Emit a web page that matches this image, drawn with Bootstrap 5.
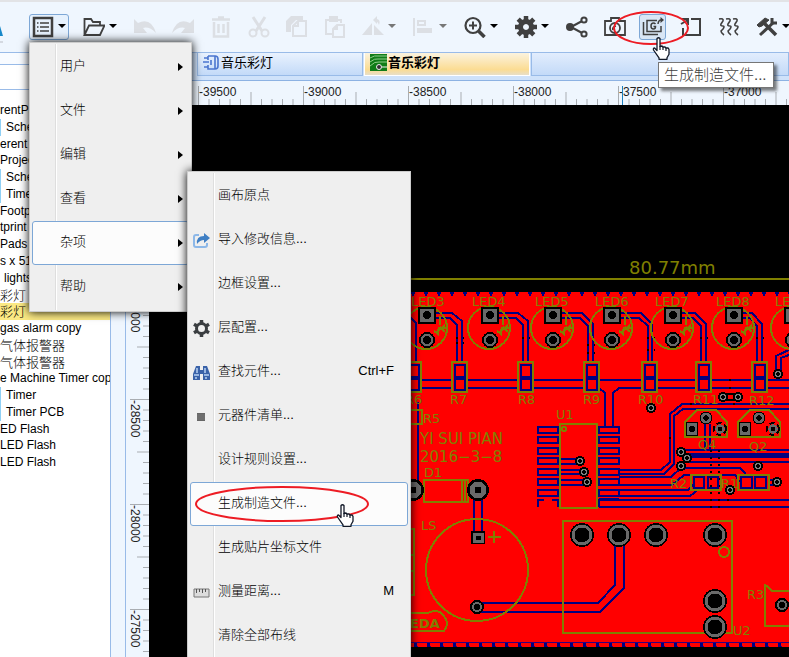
<!DOCTYPE html>
<html lang="zh-CN">
<head>
<meta charset="utf-8">
<meta name="viewport" content="width=device-width, initial-scale=1">
<title>音乐彩灯</title>
<link href="https://cdn.jsdelivr.net/npm/bootstrap@5.3.0/dist/css/bootstrap.min.css" rel="stylesheet">
<style>
:root { --edge: #99bbe8; --pale: #eff6fe; --ink: #404040; }
body { font-family: "Liberation Sans", "Noto Sans CJK SC", sans-serif; font-size: 13px; line-height: 17px; color: #000; background: var(--pale); }
.toolbar { height: 52px; border-top: 2px solid #e2e3e6; padding: 12px 0 0 29px; gap: 11px; }
.tool { width: 27px; height: 26px; padding: 0; border: 1px solid transparent; border-radius: 3px; background: none; color: var(--ink); flex: none; display: flex; align-items: center; justify-content: center; }
.tool.split { width: 40px; justify-content: space-between; padding: 0 2px; }
.tool.split::after { content: ""; border: 4px solid transparent; border-top-color: #000; border-bottom: 0; margin-bottom: 2px; }
.tool:disabled { color: #dcdfe4; }
.tool.split:disabled::after { border-top-color: #777; }
.tool.open { border-color: #7da7d6; background: #e6f1fd; }
.tool.hover { border-color: #7da7d6; background: #d9e6f5; }
.tool svg { width: 22px; height: 22px; }
.brand-edge { position: absolute; left: 0; top: 22px; width: 4px; height: 22px; }
.side { width: 111px; border-right: 1px solid var(--edge); border-top: 1px solid var(--edge); background: #fff; flex: none; }
.side-head { height: 12px; background: #f8fbff; border-bottom: 1px solid var(--edge); }
.side-search { height: 25px; border: 0; border-bottom: 1px solid var(--edge); width: 100%; }
.tree { height: 369px; margin-top: 12px; grid-auto-rows: 1fr; font-size: 12px; list-style: none; }
.tree li { white-space: nowrap; overflow: hidden; }
.tree .in { padding-left: 5px; border-left: 1px solid #8fd0f5; }
.tree .zh { font-size: 13px; font-weight: 300; }
.tree .picked { background: #fbe983; }
.gap-col { width: 14px; flex: none; border-top: 1px solid var(--edge); }
.tabs { height: 29px; border-top: 1px solid var(--edge); border-bottom: 1px solid #8db2e3; background: #cfe2fa; padding-left: 72px; }
.tab-btn { height: 23px; border: 1px solid var(--edge); border-top: 0; background: linear-gradient(#e9f2fe, #c3daf8); padding: 0 0 4px 5px; gap: 1px; width: 166px; margin-right: 1px; }
.tab-btn.current { background: linear-gradient(#fbf3df, #fbdc93 75%, #e8dfc8); font-weight: bold; border-color: #fff; }
.tab-rest { height: 23px; border: 1px solid var(--edge); border-top: 0; background: linear-gradient(#e2edfd, #c3daf8); }
.ruler-h { height: 24px; width: 100%; background: var(--pale); }
.ruler-v { width: 24px; flex: none; background: var(--pale); border-left: 1px solid var(--edge); }
.ruler-h text, .ruler-v text { font-size: 12px; fill: #222; }
.board { background: #000; }
.board text { font-family: "DejaVu Sans", sans-serif; font-size: 13px; fill: #808000; }
.board .mid { font-size: 15px; }
.board .big { font-size: 18px; }
.silk { fill: none; stroke: #808000; stroke-width: 2; }
.wire { fill: none; stroke: #000080; stroke-width: 2; }
.popup { position: absolute; background: #efefef; border: 1px solid #ccc; border-radius: 0; padding: 2px; margin: 0; box-shadow: 0 0 9px #000; font-size: 13px; min-width: 0; color: #000; }
.popup::before { content: ""; position: absolute; top: 1px; bottom: 1px; left: 25px; width: 2px; background: #fff; border-left: 1px solid #dedede; }
.menu-main { left: 29px; top: 42px; width: 163px; z-index: 10; }
.menu-sub { left: 187px; top: 171px; width: 224px; z-index: 11; }
.popup .dropdown-item { position: relative; height: 44px; padding: 0 13px 4px 27px; border: 1px solid transparent; border-radius: 3px; color: #000; font-weight: 300; }
.menu-main .dropdown-item { padding-right: 5px; }
.popup .dropdown-item.on { background: #fcfcfc; border-color: #7da7d6; }
.menu-main .dropdown-item::after { content: ""; border: 4px solid transparent; border-left: 5px solid #000; border-right: 0; margin-top: 4px; }
.popup .dropdown-item svg { position: absolute; left: 2px; top: 13px; width: 17px; height: 17px; }
.tip-box { position: absolute; left: 658px; top: 62px; padding: 3px 6px 3px 5px; font-size: 15px; font-weight: 300; line-height: 18px; color: #404040; background: #fff; border: 1px solid #767676; box-shadow: 3px 3px 3px rgba(0,0,0,.5); z-index: 12; }
.note { position: absolute; z-index: 13; pointer-events: none; overflow: visible; }
.note-top { left: 613px; top: 11px; width: 76px; height: 52px; }
.note-sub { left: 194px; top: 486px; width: 176px; height: 44px; }
</style>
<script src="https://cdn.jsdelivr.net/npm/bootstrap@5.3.0/dist/js/bootstrap.bundle.min.js"></script>
</head>
<body class="vh-100 overflow-hidden d-flex flex-column position-relative">

<svg width="0" height="0" class="position-absolute" aria-hidden="true">
  <defs>
    <symbol id="hand" viewBox="0 0 18 25"><path d="M5 2.500q1.500-1.500 3 0v8l2-.5 1 1 2-.2 1 1.200 2-.2 1 1.500v5l-2 3.500v1.500H7v-1.500L1.500 14q-.5-2 1-2L5 14.500z" fill="#fff" stroke="#111827" stroke-width="1.300" stroke-linejoin="round"/><path d="M8 10v4M11 11v3M14 12v3" stroke="#111827" stroke-width="1.200"/></symbol>
    <symbol id="cog" viewBox="0 0 22 22"><path fill="none" stroke="currentColor" stroke-width="5" d="M11 5.500a5.500 5.500 0 1 0 .01 0z"/><path stroke="currentColor" stroke-width="4.500" d="M11 0v4M11 18v4M0 11h4M18 11h4M3.200 3.200l3 3M15.800 15.800l3 3M18.800 3.200l-3 3M6.200 15.800l-3 3"/></symbol>
    <g id="led">
      <circle r="21" cx="-1" cy="13" class="silk"/>
      <path d="M-9-8H9V9H-9z" fill="#000"/><path d="M-7-6H7V7H-7z" fill="#696969"/><circle r="4" fill="#000"/>
      <path d="M-8 25h16" stroke="#000080" stroke-width="4"/><circle cy="25" r="8" fill="#000"/><circle cy="25" r="5" fill="#000" stroke="#696969" stroke-width="2.500"/>
      <path d="M13 1v9M18 10l-9 8M20 13h-8l-2 6M18 17l-5-5M7 16l5 4" class="silk" stroke-width="1.500"/>
    </g>
    <g id="res">
      <path d="M-8 1H8V30H-8z" fill="#f00"/><path class="wire" d="M-5 14V3H5V14M-5 18V28H5V18"/><path d="M-6 14h12v4H-6z" fill="#000080"/><path class="silk" d="M-8 0H7V30H-8z"/>
    </g>
    <g id="via"><circle r="5" fill="#000"/><circle r="2.500" fill="#000" stroke="#808080" stroke-width="1.600"/></g>
    <g id="hole"><circle r="12" fill="#000"/><circle r="9" fill="#000" stroke="#696969" stroke-width="3"/></g>
    <g id="trans"><path class="silk" d="M0 0V-15L12-27H31L42-15V0z"/><path d="M1-15H13V-1H1z" fill="#000"/><path d="M2-14H12V-2H2z" fill="#696969"/><circle cx="7" cy="-8" r="3" fill="#000"/><circle cx="21" cy="-19" r="6.500" fill="#000"/><circle cx="21" cy="-19" r="4" stroke="#696969" stroke-width="2.500"/><circle cx="35" cy="-8" r="6" fill="none" stroke="#000" stroke-dasharray="5 3" stroke-width="2"/><circle cx="35" cy="-8" r="3.500" stroke="#696969" stroke-width="2.500"/></g>
  </defs>
</svg>

<header class="toolbar d-flex align-items-start flex-shrink-0" role="toolbar">
  <svg class="brand-edge" viewBox="0 0 4 22"><path d="M0 4L3 14H0z" fill="#1788c9"/><path d="M0 20h3" stroke="#b9bcc4"/></svg>
  <button class="tool split open" aria-label="菜单"><svg viewBox="0 0 22 22" fill="none" stroke="currentColor"><path d="M2 2H20V20H2z" stroke-width="2.500"/><path d="M8 7h9M8 11h9M8 15h9M5 7h1.500M5 11h1.500M5 15h1.500" stroke-width="1.700"/></svg></button>
  <button class="tool split" aria-label="打开"><svg viewBox="0 0 22 22" fill="none" stroke="currentColor" stroke-width="1.800"><path d="M1.500 19V3H8L10 6H17V9M1.500 19L6 9.500H21.500L17 19z"/></svg></button>
  <button class="tool" disabled aria-label="撤销"><svg viewBox="0 0 22 22"><path fill="currentColor" d="M0 3L4 7Q17 1 22 17Q15 10 9 12L13 17H0z"/></svg></button>
  <button class="tool" disabled aria-label="重做"><svg viewBox="0 0 22 22"><path fill="currentColor" d="M22 3L18 7Q5 1 0 17Q7 10 13 12L9 17H22z"/></svg></button>
  <button class="tool" disabled aria-label="删除"><svg viewBox="0 0 22 22" fill="none" stroke="currentColor" stroke-width="2.500"><path d="M2 3.500H20M8 1.500H14M4 6V20.500H18V6M8.500 8v9M13.500 8v9"/></svg></button>
  <button class="tool" disabled aria-label="剪切"><svg viewBox="0 0 22 22" fill="none" stroke="currentColor" stroke-width="2"><path d="M5 1L14 15M17 1L8 15" stroke-width="3"/><circle cx="5" cy="17" r="3.500"/><circle cx="17" cy="17" r="3.500"/></svg></button>
  <button class="tool" disabled aria-label="复制"><svg viewBox="0 0 22 22"><path fill="currentColor" d="M5 0H17V4H10L5 9V16H0V5z"/><path d="M7 10L12 5H20V20H7zM12 5V10H7" fill="none" stroke="currentColor" stroke-width="2"/></svg></button>
  <button class="tool" disabled aria-label="粘贴"><svg viewBox="0 0 22 22" fill="none" stroke="currentColor" stroke-width="2"><path d="M8 18H2V4H17V7M6 3H13" /><path d="M6 1h7v4H6z" fill="currentColor"/><path d="M9 13L13 9H20V21H9zM13 9V13H9"/></svg></button>
  <button class="tool split" disabled aria-label="旋转"><svg viewBox="0 0 22 22"><path fill="currentColor" d="M0 19L10 7V19zM12 9L22 19H12zM11 4L15 0V3Q19 4 17 9Q16 6 15 6V8z"/></svg></button>
  <button class="tool split" disabled aria-label="对齐"><svg viewBox="0 0 22 22"><path fill="currentColor" d="M0 2H2V20H0zM4 12H19V17H4z"/><path d="M5 5H12V9H5z" fill="none" stroke="currentColor" stroke-width="2"/></svg></button>
  <button class="tool split" aria-label="缩放"><svg viewBox="0 0 22 22" fill="none" stroke="currentColor"><circle cx="9" cy="9.500" r="7.500" stroke-width="2.200"/><path d="M5 9.500h8M9 5.500v8" stroke-width="2"/><path d="M14.500 15L20.500 21" stroke-width="3.500"/></svg></button>
  <button class="tool split" aria-label="设置"><svg><use href="#cog"/></svg></button>
  <button class="tool" aria-label="分享"><svg viewBox="0 0 22 22" fill="none" stroke="currentColor" stroke-width="2"><path d="M5 11L18 4M5 11L18 18"/><circle cx="4" cy="11" r="3" fill="currentColor"/><circle cx="18" cy="4" r="2.600" fill="#eff6fe"/><circle cx="18" cy="18" r="2.600" fill="#eff6fe"/></svg></button>
  <button class="tool" aria-label="截图"><svg viewBox="0 0 22 22" fill="none" stroke="currentColor" stroke-width="1.800"><path d="M1 5H7V2H15V5H21V19H1z"/><circle cx="11" cy="12" r="5"/><path d="M9 14Q8 11 12 10"/></svg></button>
  <button class="tool hover" aria-label="生成制造文件"><svg viewBox="0 0 22 22" fill="none" stroke="currentColor" stroke-width="1.500"><path d="M15 4.500H5V15.500H19V10M1.500 6V18.500H16"/><path d="M13.500 8Q12.500 7 11.500 7Q9 7 9 10Q9 13 11.500 13Q13.500 13 13.500 10.500H11.500M16 8Q16.500 4 19 4"/><path d="M18.500 1L22 4L18.500 7z" fill="currentColor" stroke="none"/></svg></button>
  <button class="tool" aria-label="导入"><svg viewBox="0 0 22 22" fill="none" stroke="currentColor" stroke-width="2"><path d="M11 3H20V19H3V12M1 8L8 4M8 9V3H2"/></svg></button>
  <button class="tool" aria-label="差分走线"><svg viewBox="0 0 22 22" fill="none" stroke="currentColor" stroke-width="1.600"><path d="M1 3Q6 2 5 5L3 8Q2 10 5 10Q7 10 5 13L3 15Q3 17 6 19M8 3Q13 2 12 5L10 8Q9 10 12 10Q14 10 12 13L10 15Q10 17 13 19M15 3Q20 2 19 5L17 8Q16 10 19 10Q21 10 19 13L17 15Q17 17 20 19"/></svg></button>
  <button class="tool split" aria-label="工具"><svg viewBox="0 0 22 22" fill="none" stroke="currentColor"><path d="M1 9L9 2L13 4L6 10L3 11z" fill="currentColor"/><path d="M8 7L20 19" stroke-width="3.500"/><path d="M4 19L17 7" stroke-width="3"/><path d="M16 2V7H21" stroke-width="3"/></svg></button>
</header>

<div class="d-flex flex-grow-1 overflow-hidden">
  <aside class="side overflow-hidden">
    <div class="side-head"></div>
    <input class="side-search d-block" type="text" aria-label="搜索">
    <ul class="tree d-grid p-0 mb-0">
      <li>rentPar</li><li class="in">Schematic</li><li>erent</li><li>Project</li><li class="in">Schematic</li><li class="in">Timer</li><li>Footprint</li><li>tprint</li><li>Pads</li><li>s x 51</li><li class="ps-1">lights</li>
      <li class="zh">彩灯</li><li class="zh picked">彩灯</li><li>gas alarm copy</li><li class="zh">气体报警器</li><li class="zh">气体报警器</li><li>e Machine Timer copy</li><li class="in">Timer</li><li class="in">Timer PCB</li><li>ED Flash</li><li>LED Flash</li><li>LED Flash</li>
    </ul>
  </aside>
  <div class="gap-col"></div>
  <main class="flex-grow-1 d-flex flex-column overflow-hidden">
    <nav class="tabs d-flex flex-shrink-0" aria-label="文档">
      <button class="tab-btn d-flex align-items-center flex-shrink-0"><svg width="17" height="17" viewBox="0 0 17 17" fill="none" stroke="#4b76cf" stroke-width="1.600"><path d="M5 2H12V15H5V11M5 2V6M1 4H5M0 8H6M1 13H5M8 6V11M12 2Q15 2 15 5V12Q15 15 12 15"/></svg>音乐彩灯</button>
      <button class="tab-btn current d-flex align-items-center flex-shrink-0"><svg width="17" height="17" viewBox="0 0 17 17" fill="none"><path d="M0 0H17V17H0z" fill="#107c18"/><path d="M0 4Q5 1 8 2H17M0 8Q5 4 8 5H17M0 12Q5 7 9 8H17" stroke="#8fce8a"/><circle cx="9" cy="13" r="2.500" fill="#333" stroke="#eee"/><path d="M12 13H17" stroke="#eee"/></svg>音乐彩灯</button>
      <div class="tab-rest flex-grow-1"></div>
    </nav>
    <svg class="ruler-h flex-shrink-0 d-block" aria-label="水平标尺">
      <defs><pattern id="ph" x="73" width="105" height="24" patternUnits="userSpaceOnUse"><path d="M.5 5V24M11 18V24M21.500 18V24M32 18V24M42.500 18V24M53 11V24M63.500 18V24M74 18V24M84.500 18V24M95 18V24" stroke="#a9adb2"/></pattern></defs>
      <rect width="100%" height="24" fill="url(#ph)"/>
      <text x="74" y="15">-39500</text><text x="179" y="15">-39000</text><text x="284" y="15">-38500</text><text x="389" y="15">-38000</text><text x="494" y="15">-37500</text><text x="599" y="15">-37000</text>
      <path d="M497.500 5V24" stroke="#1a7fc0"/>
    </svg>
    <div class="d-flex flex-grow-1 overflow-hidden">
      <svg class="ruler-v h-100" aria-label="垂直标尺">
        <defs><pattern id="pv" y="84" width="24" height="105" patternUnits="userSpaceOnUse"><path d="M4 .5H24M17 11H24M17 21.500H24M17 32H24M17 42.500H24M11 53H24M17 63.500H24M17 74H24M17 84.500H24M17 95H24" stroke="#a9adb2"/></pattern></defs>
        <rect width="24" height="100%" fill="url(#pv)"/>
        <g transform="rotate(90)"><text x="190" y="-5">-29000</text><text x="295" y="-5">-28500</text><text x="400" y="-5">-28000</text><text x="505" y="-5">-27500</text></g>
      </svg>
      <svg class="board flex-grow-1 h-100" shape-rendering="crispEdges" aria-label="电路板">
        <defs>
          <pattern id="top" x="411" y="292" width="13" height="6" patternUnits="userSpaceOnUse"><path d="M0 0h4v2H0zM1 2h2v2H1z" fill="#000080"/></pattern>
          <pattern id="bot" x="414" y="641" width="13" height="6" patternUnits="userSpaceOnUse"><path d="M0 1h13M0 5.500h4" stroke="#300080"/><path d="M0 2h3v4H0z" fill="#000080"/></pattern>
        </defs>
        <g transform="translate(-149 -105)">
          <path d="M380 292H2000V647H380z" fill="#f00"/>
          <path d="M380 292H2000V298H380z" fill="url(#top)"/><path d="M380 641H2000V647H380z" fill="url(#bot)"/>
          <path class="silk" d="M380 279H2000"/>
          <text class="big" x="629" y="274">80.77mm</text>
          <path class="wire" d="M400 380H2000M400 388H599L605 393V426M2000 388H619L613 393V426
            M434 313H452L462 321V362M434 318H450L457 325V362M497 313H518L528 321V362M497 318H516L523 325V362M560 313H582L593 324V362M560 318H580L588 326V362M619 313H641L652 324V362M619 318H639L648 326V362M680 313H695L706 324V362M680 318H693L701 326V362M741 313H752L762 324V362M741 318H750L757 326V362M411 318L416 323V362
            M789 350L776 356V374M789 355L781 358V374M418 402V480
            M2000 404H682L670 414V462L661 470H619M2000 409H683L674 416V464L664 474H619M705 424V450M710 424V450
            M681 450H2000M687 462H2000M681 468H740L746 474M681 455L687 461M619 477H671L682 467M619 485H672L684 475H735L740 482M619 490H688L694 484M619 496H690L699 489M599 500H2000M599 507H2000M770 480H777M770 485H777
            M558 459H580M558 464H580M558 470H584M558 474H584M558 480H587M558 485H587M474 500V531M482 500V531M477 603H598L615 585V545M477 612H600L624 588V545"/>
          <path d="M686 453H2000V458H686zM599 498H619V501H599z" fill="#000080"/>
          <path class="wire" d="M538 427h20v6h-20zM538 437h20v6h-20zM538 448h20v6h-20zM538 458h20v6h-20zM538 469h20v6h-20zM538 479h20v6h-20zM538 490h20v6h-20zM538 507V500h6M552 500h6v7M599 427h20v6h-20zM599 437h20v6h-20zM599 448h20v6h-20zM599 458h20v6h-20zM599 469h20v6h-20zM599 479h20v6h-20zM599 490h20v6h-20zM599 507V500h20"/>
          <path d="M456 338h8M456 343h8M522 338h8M587 345h8M587 353h8M647 338h8M647 350h8M700 338h8M756 338h8M729 380h6M729 388h6M690 404h6M733 404h6M669 438h6M711 450v60M719 450v60M727 500h6" stroke="#000" stroke-width="2" stroke-dasharray="2 5"/>
          <use href="#led" x="427" y="315"/><use href="#led" x="490" y="315"/><use href="#led" x="553" y="315"/><use href="#led" x="612" y="315"/><use href="#led" x="673" y="315"/><use href="#led" x="734" y="315"/><use href="#led" x="793" y="315"/>
          <use href="#res" x="414" y="362"/><use href="#res" x="460" y="362"/><use href="#res" x="526" y="362"/><use href="#res" x="592" y="362"/><use href="#res" x="650" y="362"/><use href="#res" x="704" y="362"/><use href="#res" x="760" y="362"/>
          <text x="411" y="306">LED3</text><text x="472" y="306">LED4</text><text x="535" y="306">LED5</text><text x="595" y="306">LED6</text><text x="655" y="306">LED7</text><text x="716" y="306">LED8</text><text x="775" y="306">LED9</text>
          <text x="405" y="404">R6</text><text x="450" y="404">R7</text><text x="518" y="404">R8</text><text x="583" y="404">R9</text><text x="638" y="404">R10</text><text x="693" y="404">R11</text><text x="749" y="405">R12</text>
          <text x="423" y="423">R5</text><text x="556" y="419">U1</text><text x="424" y="477">D1</text><text x="421" y="530">LS</text><text x="733" y="635">U2</text><text x="747" y="599">R3</text><text x="670" y="488">R2</text><text x="721" y="488">R1</text><text x="698" y="449">Q4</text><text x="749" y="451">Q2</text>
          <text class="mid" x="420" y="444">YI SUI PIAN</text><text class="mid" x="420" y="462">2016−3−8</text>
          <text x="410" y="628" font-weight="bold">EDA</text>
          <path class="silk" d="M400 410H422V424H400M560 424H597V508H560zM424 480H468V502H424zM462 480V502M465 480V502M488 537H501M494 531V543M563 521H732V633H563zM691 475H721V490H691zM738 475H769V490H738zM2000 626H765V585L767 586L772 591H2000M400 529H414V595H400M400 555H414M400 571H414M400 613H428Q438 608 444 616Q450 624 444 631H400"/>
          <circle class="silk" cx="564" cy="429" r="2"/><circle class="silk" cx="477" cy="570" r="51"/><circle class="silk" cx="724" cy="552" r="5"/>
          <path class="wire" d="M694 477H704V488H694zM708 477H718V488H708zM741 477H752V488H741zM755 477H766V488H755z"/>
          <use href="#trans" x="685" y="437"/><use href="#trans" x="738" y="437"/>
          <path d="M723 394H738M723 400H738" stroke="#000" stroke-width="2"/>
          <use href="#via" x="723" y="397"/><use href="#via" x="738" y="397"/><use href="#via" x="651" y="408"/><use href="#via" x="778" y="374"/><use href="#via" x="681" y="452"/><use href="#via" x="687" y="458"/><use href="#via" x="681" y="466"/><use href="#via" x="758" y="466"/><use href="#via" x="777" y="482"/><use href="#via" x="730" y="490"/><use href="#via" x="580" y="461"/><use href="#via" x="584" y="472"/><use href="#via" x="587" y="482"/>
          <g fill="#000"><circle cx="478" cy="490" r="11"/><circle cx="413" cy="490" r="11"/><path d="M471 531H485V544H471z"/><circle cx="477" cy="607" r="7"/><circle cx="782" cy="605" r="7"/></g>
          <g stroke="#696969"><circle cx="478" cy="490" r="6" stroke-width="5"/><circle cx="413" cy="490" r="6" stroke-width="5"/><path d="M474 534H482V541H474z" stroke-width="3"/><circle cx="477" cy="607" r="4" stroke-width="2"/><circle cx="782" cy="605" r="4" stroke-width="2"/></g>
          <use href="#hole" x="582" y="535"/><use href="#hole" x="619" y="535"/><use href="#hole" x="656" y="535"/><use href="#hole" x="715" y="535"/><use href="#hole" x="715" y="601"/><use href="#hole" x="715" y="627"/>
        </g>
      </svg>
    </div>
  </main>
</div>

<div class="popup menu-main dropdown-menu d-block" role="menu">
  <button class="dropdown-item d-flex align-items-center justify-content-between" role="menuitem">用户</button>
  <button class="dropdown-item d-flex align-items-center justify-content-between" role="menuitem">文件</button>
  <button class="dropdown-item d-flex align-items-center justify-content-between" role="menuitem">编辑</button>
  <button class="dropdown-item d-flex align-items-center justify-content-between" role="menuitem">查看</button>
  <button class="dropdown-item on d-flex align-items-center justify-content-between" role="menuitem">杂项</button>
  <button class="dropdown-item d-flex align-items-center justify-content-between" role="menuitem">帮助</button>
</div>

<div class="popup menu-sub dropdown-menu d-block" role="menu">
  <button class="dropdown-item d-flex align-items-center justify-content-between" role="menuitem">画布原点</button>
  <button class="dropdown-item d-flex align-items-center justify-content-between" role="menuitem"><svg viewBox="0 0 17 17" fill="none"><path d="M6 3H3Q1 3 1 5V13Q1 15 3 15H12Q14 15 14 13V11" stroke="#8db8e8" stroke-width="2"/><path d="M4 12Q3 4 11 4V1L17 6L11 11V8Q7 8 4 12z" fill="#3f7fc4"/></svg>导入修改信息...</button>
  <button class="dropdown-item d-flex align-items-center justify-content-between" role="menuitem">边框设置...</button>
  <button class="dropdown-item d-flex align-items-center justify-content-between" role="menuitem"><svg viewBox="0 0 17 17" fill="none" stroke="#3a3d40"><circle cx="8.500" cy="8.500" r="5" stroke-width="3"/><path d="M8.500 0V3M8.500 14V17M1 4.300L4 6M13 11L16 12.700M1 12.700L4 11M13 6L16 4.300" stroke-width="3.500"/></svg>层配置...</button>
  <button class="dropdown-item d-flex align-items-center justify-content-between" role="menuitem"><svg viewBox="0 0 17 17"><path d="M3 2H7V6H10V2H14L17 10V16H10V10H7V16H0V10z" fill="#3a62a8"/><path d="M1 11H6M11 11H16M4 4V9M12 4V9M2 14H4M12 14H14" stroke="#b9d2f2" stroke-width="1.500"/></svg>查找元件...<span>Ctrl+F</span></button>
  <button class="dropdown-item d-flex align-items-center justify-content-between" role="menuitem"><svg viewBox="0 0 17 17"><path d="M4 5H12V13H4z" fill="#666"/><path d="M4 7H12M4 9H12M4 11H12" stroke="#888" stroke-width=".5"/></svg>元器件清单...</button>
  <button class="dropdown-item d-flex align-items-center justify-content-between" role="menuitem">设计规则设置...</button>
  <button class="dropdown-item on d-flex align-items-center justify-content-between" role="menuitem">生成制造文件...</button>
  <button class="dropdown-item d-flex align-items-center justify-content-between" role="menuitem">生成贴片坐标文件</button>
  <button class="dropdown-item d-flex align-items-center justify-content-between" role="menuitem"><svg viewBox="0 0 17 17" fill="none"><path d="M1 5H16V13H1z" fill="#dcdcdc" stroke="#777"/><path d="M3.500 5V9M6.500 5V8M9.500 5V9M12.500 5V8" stroke="#555"/></svg>测量距离...<span>M</span></button>
  <button class="dropdown-item d-flex align-items-center justify-content-between" role="menuitem">清除全部布线</button>
</div>

<div class="tip-box" role="tooltip">生成制造文件...</div>
<svg class="note note-top" viewBox="0 0 76 52"><ellipse cx="38" cy="17" rx="37" ry="16" fill="none" stroke="#ed1c24" stroke-width="2"/><use href="#hand" x="39" y="25" width="18" height="25"/></svg>
<svg class="note note-sub" viewBox="0 0 176 44"><ellipse cx="88" cy="18" rx="86" ry="17" fill="none" stroke="#ed1c24" stroke-width="2"/><use href="#hand" x="142" y="17" width="18" height="25"/></svg>
</body>
</html>
